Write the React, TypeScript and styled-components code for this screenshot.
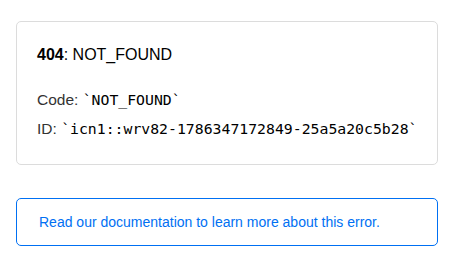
import React from "react";
import styled, { createGlobalStyle } from "styled-components";

const Global = createGlobalStyle`
  html, body { margin: 0; padding: 0; background: #fff; }
  body { font-family: "Liberation Sans", Arial, sans-serif; color: #333; }
`;

const Page = styled.main`
  width: 422px;
  padding: 21px 16px;
  display: flex;
  flex-direction: column;
  gap: 33px;
`;

const Card = styled.section`
  border: 1px solid #dcdcdc;
  border-radius: 5px;
  padding: 23px 20px 21px;
  display: flex;
  flex-direction: column;
`;

const Title = styled.p`
  margin: 0 0 20px;
  font-size: 16px;
  line-height: 20px;
  color: #000;
  strong { font-weight: 700; }
`;

const Row = styled.p`
  margin: 0;
  font-size: 15.5px;
  line-height: 29px;
  color: #333;
  white-space: nowrap;
`;

const Code = styled.code`
  font-family: "DejaVu Sans Mono", "Liberation Mono", monospace;
  font-size: 14.8px;
  color: #000;
`;

const LinkBox = styled.a`
  display: block;
  border: 1px solid #0070f3;
  border-radius: 5px;
  padding: 15px 22px;
  font-size: 14px;
  line-height: 16px;
  color: #0070f3;
  text-decoration: none;
`;

export default function App() {
  return (
    <>
      <Global />
      <Page>
        <Card>
          <Title>
            <strong>404</strong>: NOT_FOUND
          </Title>
          <Row>
            Code: <Code>`NOT_FOUND`</Code>
          </Row>
          <Row>
            ID: <Code>`icn1::wrv82-1786347172849-25a5a20c5b28`</Code>
          </Row>
        </Card>
        <LinkBox href="#">Read our documentation to learn more about this error.</LinkBox>
      </Page>
    </>
  );
}
